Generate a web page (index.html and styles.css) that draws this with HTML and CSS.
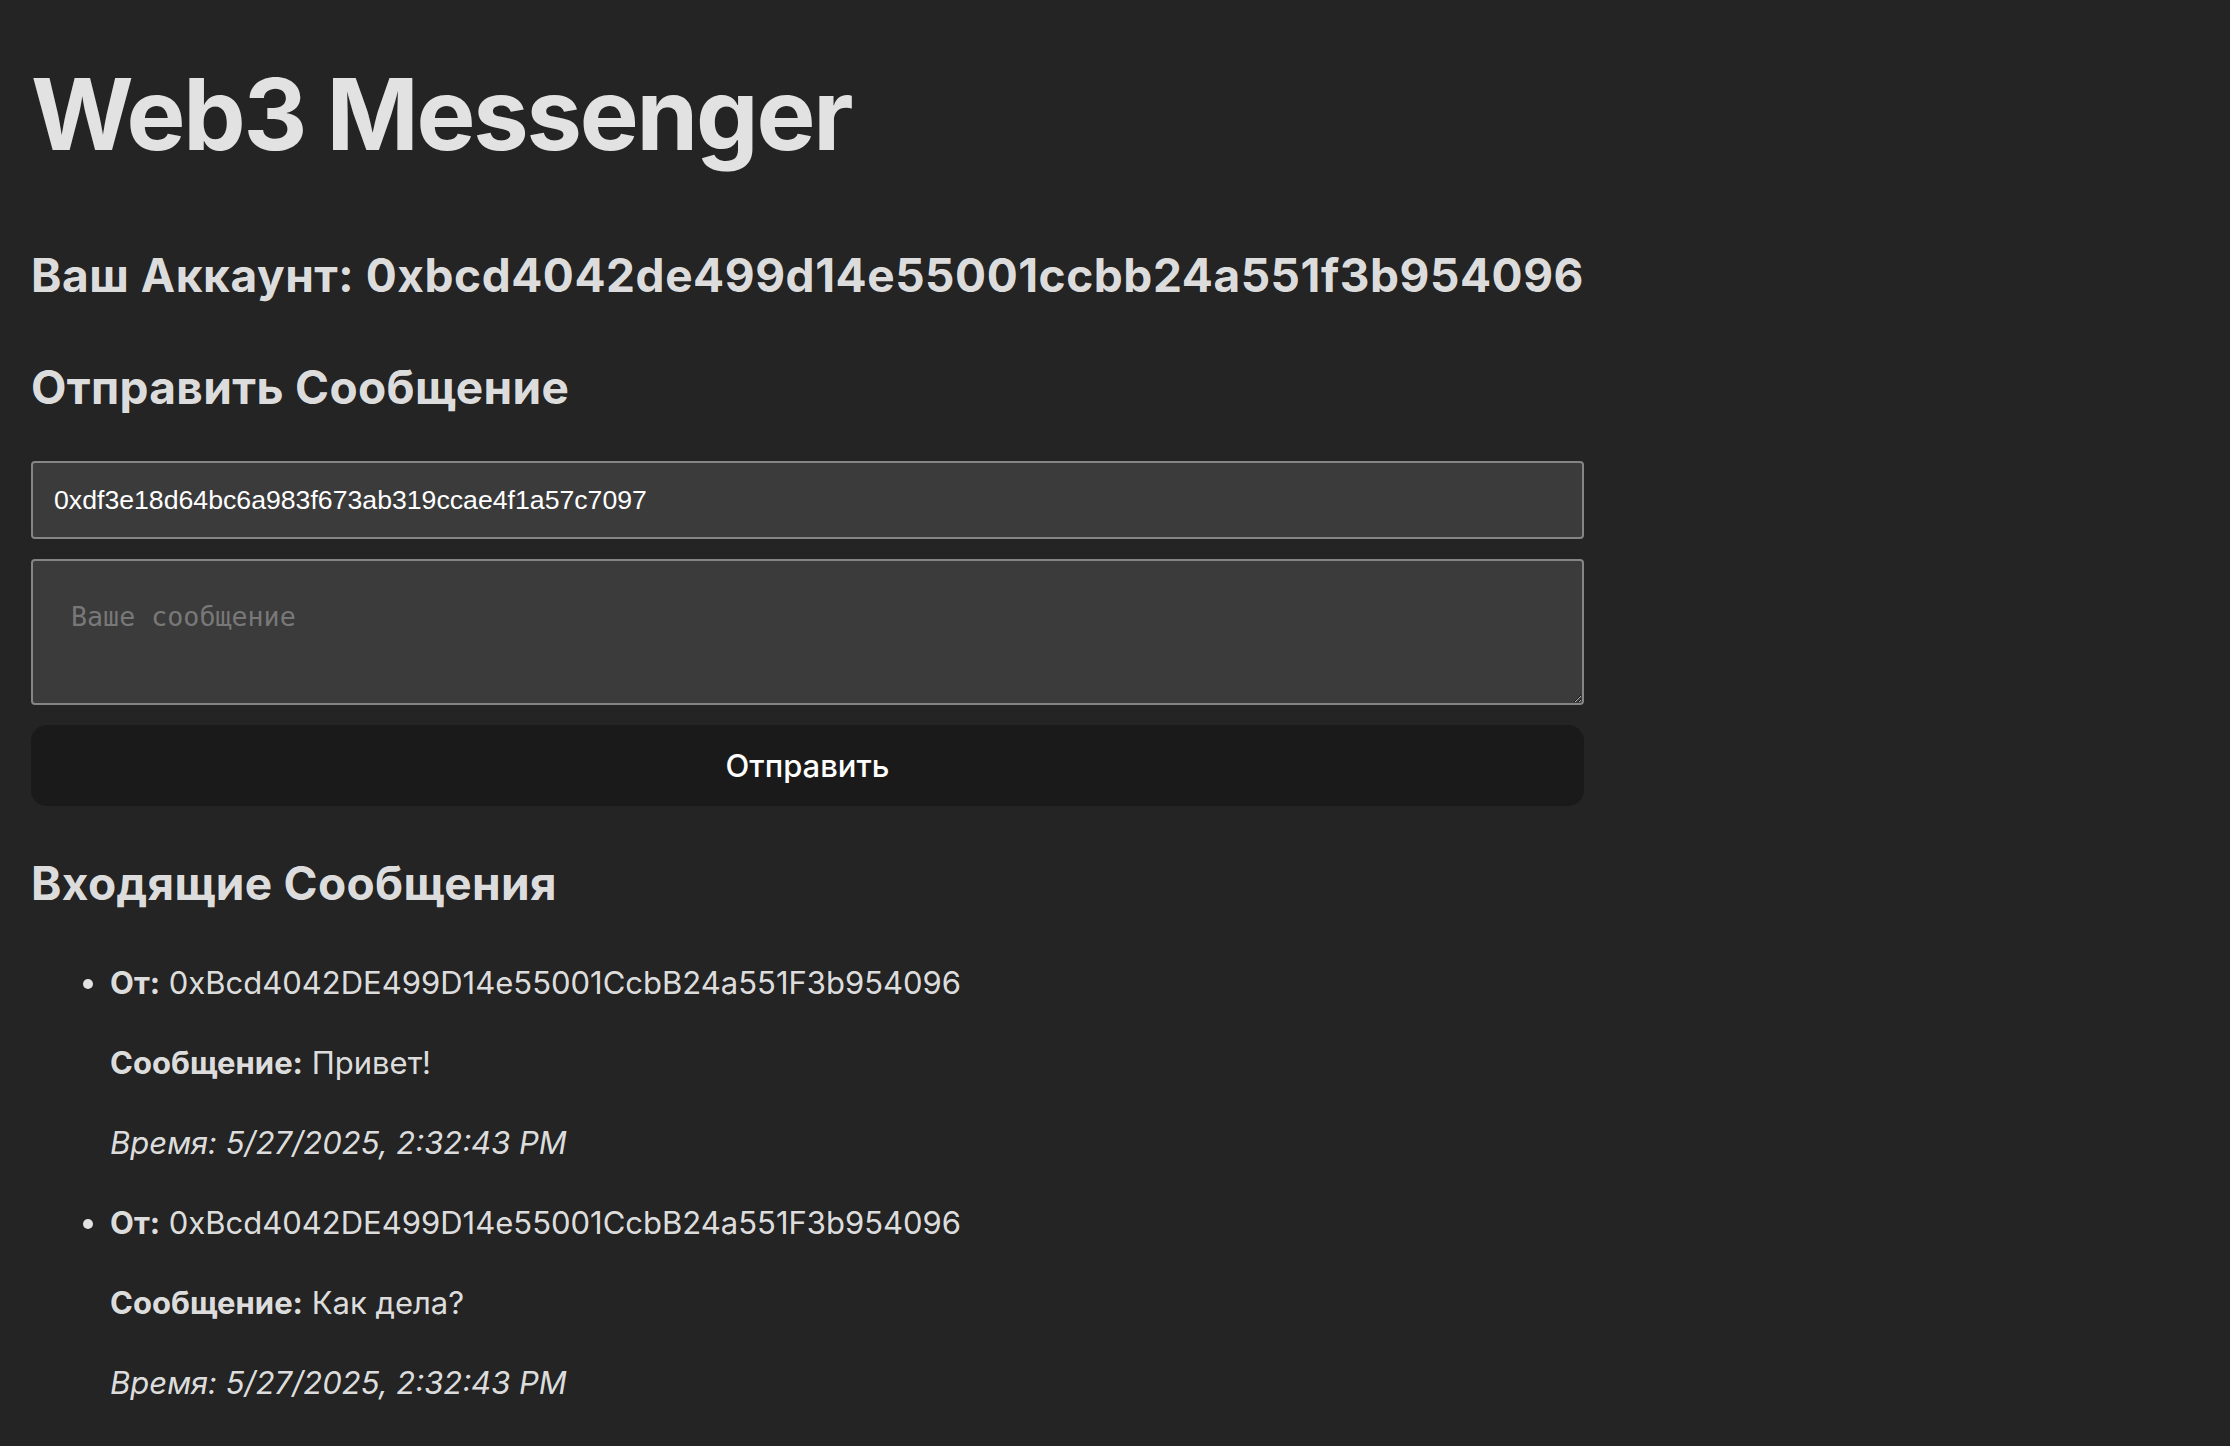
FILE: index.html
```html
<!DOCTYPE html>
<html lang="ru">
<head>
<meta charset="utf-8">
<title>Web3 Messenger</title>
<link rel="stylesheet" href="styles.css">
</head>
<body>
<div class="app">
  <h1 class="title">Web3 Messenger</h1>
  <h2 class="account">Ваш Аккаунт: 0xbcd4042de499d14e55001ccbb24a551f3b954096</h2>
  <h2 class="section-title send-title">Отправить Сообщение</h2>
  <form class="send-form">
    <input class="field field-address" type="text" value="0xdf3e18d64bc6a983f673ab319ccae4f1a57c7097">
    <textarea class="field field-message" placeholder="Ваше сообщение"></textarea>
    <button class="send-btn" type="button">Отправить</button>
  </form>
  <h2 class="section-title inbox-title">Входящие Сообщения</h2>
  <ul class="inbox">
    <li class="message">
      <p><strong>От:</strong> 0xBcd4042DE499D14e55001CcbB24a551F3b954096</p>
      <p><strong>Сообщение:</strong> Привет!</p>
      <p><em>Время: 5/27/2025, 2:32:43 PM</em></p>
    </li>
    <li class="message">
      <p><strong>От:</strong> 0xBcd4042DE499D14e55001CcbB24a551F3b954096</p>
      <p><strong>Сообщение:</strong> Как дела?</p>
      <p><em>Время: 5/27/2025, 2:32:43 PM</em></p>
    </li>
  </ul>
</div>
</body>
</html>
```

FILE: styles.css
```css
html {
  color-scheme: dark;
}
body {
  margin: 0;
  background: #242424;
  color: rgba(255, 255, 255, 0.87);
  font-family: Inter, "Noto Sans", sans-serif;
  font-size: 31px;
  line-height: 48px;
}
.app {
  width: 1553px;
  padding: 0 0 0 31px;
}
.title {
  margin: 60px 0 70px;
  font-size: 99px;
  line-height: 109px;
  font-weight: 700;
  letter-spacing: -2.2px;
}
.account {
  margin: 0 0 40px;
  font-size: 46px;
  line-height: 72px;
  font-weight: 700;
  letter-spacing: 0.55px;
  white-space: nowrap;
}
.section-title {
  margin: 0;
  font-size: 46px;
  line-height: 72px;
  font-weight: 700;
  letter-spacing: 0.35px;
}
.send-title {
  margin-bottom: 38px;
}
.send-form {
  display: flex;
  flex-direction: column;
  gap: 20px;
  margin: 0 0 41px;
}
.field {
  box-sizing: border-box;
  width: 100%;
  margin: 0;
  border: 2px solid #858585;
  border-radius: 4px;
  background: #3b3b3b;
  color: #fff;
}
.field-address {
  height: 78px;
  padding: 0 21px;
  font-family: "Liberation Sans", Arial, sans-serif;
  font-size: 26.67px;
}
.field-message {
  height: 146px;
  padding: 40px 38px;
  font-family: "DejaVu Sans Mono", monospace;
  font-size: 26.67px;
  line-height: normal;
}
.field-message::placeholder {
  color: #787878;
}
.send-btn {
  height: 81px;
  border: 2px solid transparent;
  border-radius: 16px;
  background: #1a1a1a;
  color: #fff;
  font-family: Inter, "Noto Sans", sans-serif;
  font-size: 31px;
  font-weight: 500;
  cursor: pointer;
}
.inbox-title {
  margin-bottom: 40px;
}
.inbox {
  margin: 0;
  padding: 0 0 0 79px;
}
.message p {
  margin: 32px 0;
}
.message strong {
  font-weight: 700;
}
```
